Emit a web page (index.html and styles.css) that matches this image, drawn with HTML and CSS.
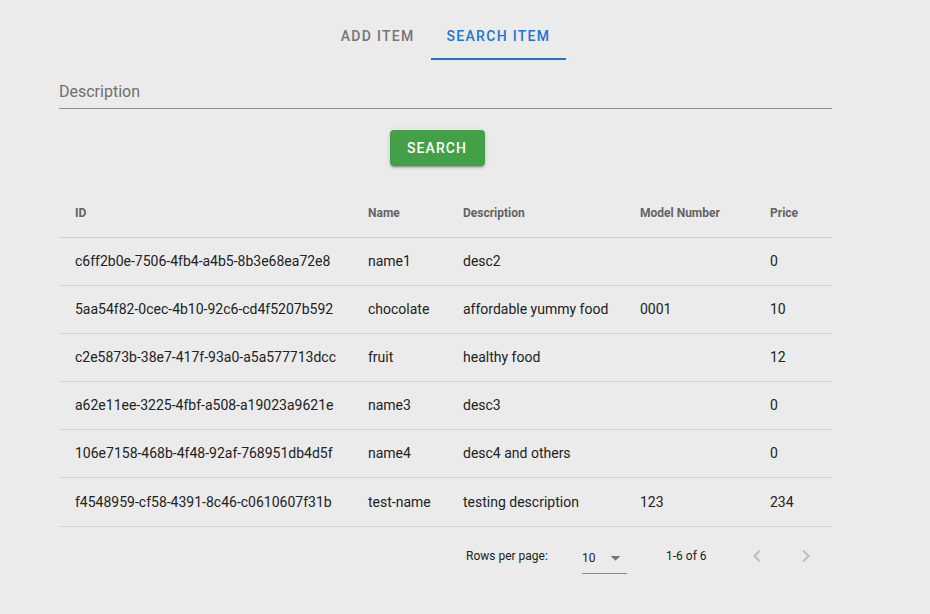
FILE: index.html
```html
<!DOCTYPE html>
<html>
<head>
<meta charset="utf-8">
<link rel="stylesheet" href="styles.css">
</head>
<body>
<div class="page">
  <div class="tabs">
    <div class="tab">ADD ITEM</div>
    <div class="tab active">SEARCH ITEM</div>
  </div>
  <div class="field">
    <div class="label">Description</div>
  </div>
  <div class="btn-row">
    <button class="btn">SEARCH</button>
  </div>
  <table class="tbl">
    <colgroup>
      <col class="c1"><col class="c2"><col class="c3"><col class="c4"><col class="c5">
    </colgroup>
    <thead>
      <tr><th>ID</th><th>Name</th><th>Description</th><th>Model Number</th><th>Price</th></tr>
    </thead>
    <tbody>
      <tr><td>c6ff2b0e-7506-4fb4-a4b5-8b3e68ea72e8</td><td>name1</td><td>desc2</td><td></td><td>0</td></tr>
      <tr><td>5aa54f82-0cec-4b10-92c6-cd4f5207b592</td><td>chocolate</td><td>affordable yummy food</td><td>0001</td><td>10</td></tr>
      <tr><td>c2e5873b-38e7-417f-93a0-a5a577713dcc</td><td>fruit</td><td>healthy food</td><td></td><td>12</td></tr>
      <tr><td>a62e11ee-3225-4fbf-a508-a19023a9621e</td><td>name3</td><td>desc3</td><td></td><td>0</td></tr>
      <tr><td>106e7158-468b-4f48-92af-768951db4d5f</td><td>name4</td><td>desc4 and others</td><td></td><td>0</td></tr>
      <tr class="last"><td>f4548959-cf58-4391-8c46-c0610607f31b</td><td>test-name</td><td>testing description</td><td>123</td><td>234</td></tr>
    </tbody>
  </table>
  <div class="pager">
    <span class="rpp">Rows per page:</span>
    <div class="select"><span>10</span><svg width="24" height="24" viewBox="0 0 24 24"><path d="M7 10l5 5 5-5z" fill="#757575"/></svg></div>
    <span class="range">1-6 of 6</span>
    <div class="nav">
      <svg width="24" height="24" viewBox="0 0 24 24"><path d="M15.41 7.41L14 6l-6 6 6 6 1.41-1.41L10.83 12z" fill="#bdbdbd"/></svg>
    </div>
    <div class="nav next">
      <svg width="24" height="24" viewBox="0 0 24 24"><path d="M10 6L8.59 7.41 13.17 12l-4.58 4.59L10 18l6-6z" fill="#bdbdbd"/></svg>
    </div>
  </div>
</div>
</body>
</html>
```

FILE: styles.css
```css
html, body {
  margin: 0;
  padding: 0;
  background: #ebebeb;
  font-family: Roboto, "Liberation Sans", Arial, sans-serif;
}
.page {
  width: 773px;
  margin-left: 59px;
  padding-top: 13px;
}
.tabs {
  display: flex;
  justify-content: center;
}
.tab {
  height: 47px;
  box-sizing: border-box;
  padding: 0 16px;
  display: flex;
  align-items: center;
  font-size: 14px;
  font-weight: 500;
  letter-spacing: 1.3px;
  color: #757575;
  border-bottom: 2px solid transparent;
}
.tab.active {
  color: #1976d2;
  border-bottom-color: #1976d2;
}
.field {
  margin-top: 20px;
  height: 28px;
  border-bottom: 1px solid #8f8f8f;
}
.label {
  font-size: 16px;
  color: #6f6f6f;
  line-height: 20px;
  padding-top: 2px;
}
.btn-row {
  display: flex;
  justify-content: center;
  margin-top: 21px;
  padding-right: 17px;
}
.btn {
  width: 95px;
  height: 36px;
  background: #43a047;
  color: #fff;
  border: none;
  border-radius: 4px;
  font-family: Roboto, "Liberation Sans", Arial, sans-serif;
  font-size: 14px;
  font-weight: 500;
  letter-spacing: 1.1px;
  box-shadow: 0 3px 1px -2px rgba(0,0,0,0.2), 0 2px 2px 0 rgba(0,0,0,0.14), 0 1px 5px 0 rgba(0,0,0,0.12);
}
.tbl {
  margin-top: 15px;
  width: 773px;
  border-collapse: collapse;
  table-layout: fixed;
}
.c1 { width: 293px; }
.c2 { width: 95px; }
.c3 { width: 177px; }
.c4 { width: 130px; }
.c5 { width: 78px; }
.tbl th {
  height: 56px;
  padding: 9px 0 0 16px;
  text-align: left;
  font-size: 12px;
  font-weight: 700;
  color: #636363;
  border-bottom: 1px solid #cfcfcf;
  box-sizing: border-box;
}
.tbl td {
  height: 48px;
  padding: 0 0 0 16px;
  font-size: 14px;
  color: #222;
  border-bottom: 1px solid #d4d4d4;
  box-sizing: border-box;
  white-space: nowrap;
}
.tbl tr.last td {
  height: 49px;
  padding-top: 1px;
}
.pager {
  height: 56px;
  display: flex;
  align-items: center;
  font-size: 12px;
  color: #222;
  padding-left: 407px;
  padding-top: 3px;
  box-sizing: border-box;
}
.pager > * {
  flex-shrink: 0;
}
.rpp {
  width: 116px;
}
.select {
  display: flex;
  align-items: center;
  width: 45px;
  height: 32px;
  box-sizing: border-box;
  border-bottom: 1px solid #8a8a8a;
  margin-top: 4px;
  font-size: 12px;
}
.select span {
  width: 23px;
}
.range {
  margin-left: 39px;
  width: 79px;
}
.nav {
  width: 24px;
  height: 24px;
}
.nav.next {
  margin-left: 25px;
}
.nav svg { display: block; }
```
